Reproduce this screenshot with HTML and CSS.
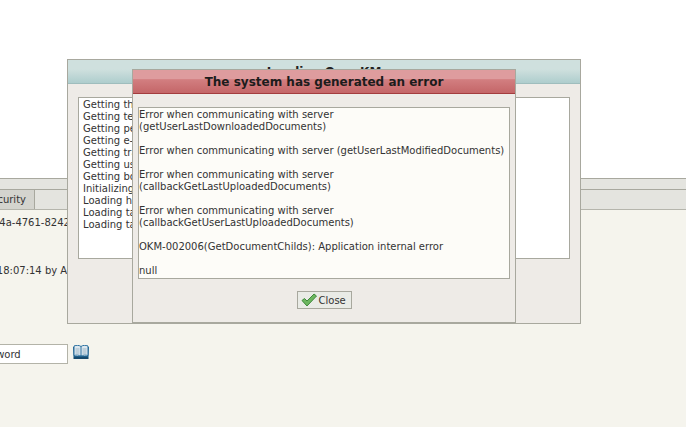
FILE: index.html
```html
<!DOCTYPE html>
<html>
<head>
  <title>OpenKM</title>
  <link rel="stylesheet" href="styles.css">
</head>
<body>
  <div class="top"></div>
  <div class="strip"></div>
  <div class="tabbar">
    <div class="tab">Security</div>
  </div>
  <div class="content">
    <div class="uuid">f81c2e07-b14a-4761-8242-9c0e7d1a5b36</div>
    <div class="modified">12/04/2013 18:07:14 by Administrator</div>
    <div class="search">
      <input class="search-input" type="text" value="Keyword">
      <svg class="book" width="16" height="14" viewBox="0 0 16 14">
        <path d="M0 2 L0.5 12 H15.5 L16 2 H14.5 V11 H1.5 V2 Z" fill="#1f5f8b"/>
        <path d="M1 1 C3.5 0 6 0 8 1.5 C10 0 12.5 0 15 1 V10.5 C12.5 9.8 10 10 8 11 C6 10 3.5 9.8 1 10.5 Z" fill="#dbe7ef" stroke="#2a6f9e" stroke-width="1"/>
        <path d="M8 1.5 V11" stroke="#2a6f9e"/>
        <path d="M2.5 4 H6.5 M2.5 6 H6.5 M2.5 8 H6.5 M9.5 4 H13.5 M9.5 6 H13.5 M9.5 8 H13.5" stroke="#9fb6c6"/>
        <rect x="0.5" y="12" width="15" height="2" fill="#174a6e"/>
      </svg>
    </div>
  </div>

  <div class="dialog startup">
    <div class="startup-title">Loading OpenKM</div>
    <div class="startup-body">
      <div class="log">
        <div>Getting the configuration</div>
        <div>Getting templates</div>
        <div>Getting personal</div>
        <div>Getting e-mail</div>
        <div>Getting trash</div>
        <div>Getting user</div>
        <div>Getting bookmarks</div>
        <div>Initializing</div>
        <div>Loading history</div>
        <div>Loading taxonomy</div>
        <div>Loading tabs</div>
      </div>
    </div>
  </div>

  <div class="dialog error">
    <div class="error-title">The system has generated an error</div>
    <div class="error-body">
      <div class="messages">
        Error when communicating with server<br>
        (getUserLastDownloadedDocuments)<br><br>
        Error when communicating with server (getUserLastModifiedDocuments)<br><br>
        Error when communicating with server<br>
        (callbackGetLastUploadedDocuments)<br><br>
        Error when communicating with server<br>
        (callbackGetUserLastUploadedDocuments)<br><br>
        OKM-002006(GetDocumentChilds): Application internal error<br><br>
        null
      </div>
      <div class="actions">
        <button class="close-btn">
          <svg width="16" height="14" viewBox="0 0 16 14">
            <path d="M1 7.5 L3.5 5.5 L6 8 L13 1 L15.5 3 L6 13 Z" fill="#6cb65f" stroke="#3f8a3c" stroke-width="1"/>
          </svg>
          Close
        </button>
      </div>
    </div>
  </div>
</body>
</html>
```

FILE: styles.css
```css
html, body {
  margin: 0;
  padding: 0;
  height: 100%;
  overflow: hidden;
}

body {
  display: flex;
  flex-direction: column;
  font-family: 'DejaVu Sans', sans-serif;
  font-size: 10px;
  color: #333;
  background-color: #ffffff;
}

.top {
  height: 178px;
}

.strip {
  height: 10px;
  background-color: #e4e4df;
  border-top: 1px solid #a8a89e;
  border-bottom: 1px solid #a8a89e;
}

.tabbar {
  height: 19px;
  background-color: #e4e4df;
  border-bottom: 1px solid #b5b5ac;
  overflow: hidden;
  display: flex;
}

.tab {
  margin-left: -20px;
  width: 46px;
  padding-right: 8px;
  text-align: right;
  line-height: 19px;
  background-color: #d4d4ce;
  border-right: 1px solid #a8a89e;
}

.content {
  flex: 1;
  background-color: #f5f4ed;
  overflow: hidden;
}

.uuid {
  margin-top: 7px;
  margin-left: -64px;
  line-height: 12px;
  white-space: nowrap;
}

.modified {
  margin-top: 36px;
  margin-left: -64px;
  line-height: 12px;
  white-space: nowrap;
}

.search {
  margin-top: 67px;
  display: flex;
  align-items: center;
  gap: 5px;
}

.search-input {
  margin-left: -26px;
  width: 86px;
  height: 14px;
  padding: 2px 3px;
  border: 1px solid #b3b3a8;
  background: #fff;
  font-family: 'DejaVu Sans', sans-serif;
  font-size: 10px;
  color: #333;
}

.book {
  margin-bottom: 5px;
}

.dialog {
  position: absolute;
  box-sizing: border-box;
  border: 1px solid #a8a89e;
  background-color: #eeebe7;
}

.startup {
  left: 67px;
  top: 59px;
  width: 514px;
  height: 265px;
}

.startup-title {
  height: 23px;
  line-height: 24px;
  text-align: center;
  font-weight: bold;
  font-size: 12px;
  color: #222;
  background: linear-gradient(#cfe0de 0, #cfe0de 40%, #aecdcd 100%);
  border-bottom: 1px solid #9fbdbd;
}

.startup-body {
  padding: 13px 10px 0 10px;
}

.log {
  box-sizing: border-box;
  height: 162px;
  padding: 1px 4px 0 4px;
  line-height: 12px;
  background-color: #ffffff;
  border: 1px solid #a8a89e;
  white-space: nowrap;
}

.error {
  left: 132px;
  top: 69px;
  width: 384px;
  height: 254px;
}

.error-title {
  height: 23px;
  line-height: 25px;
  text-align: center;
  font-weight: bold;
  font-size: 12px;
  color: #1c1c1c;
  background: linear-gradient(#de9c9e 0, #de9c9e 38%, #d27e80 42%, #c46668 100%);
  border-bottom: 1px solid #a33c3e;
}

.error-body {
  padding: 13px 5px 0 5px;
}

.messages {
  box-sizing: border-box;
  height: 172px;
  padding: 1px 0;
  line-height: 12px;
  background-color: #fdfcf8;
  border: 1px solid #a8a89e;
}

.actions {
  display: flex;
  justify-content: center;
  margin-top: 12px;
}

.close-btn {
  display: flex;
  align-items: center;
  gap: 2px;
  box-sizing: border-box;
  width: 55px;
  height: 18px;
  padding: 0 0 0 3px;
  font-family: 'DejaVu Sans', sans-serif;
  font-size: 10px;
  color: #333;
  background-color: #e9ebe6;
  border: 1px solid #a8a89e;
}
```
